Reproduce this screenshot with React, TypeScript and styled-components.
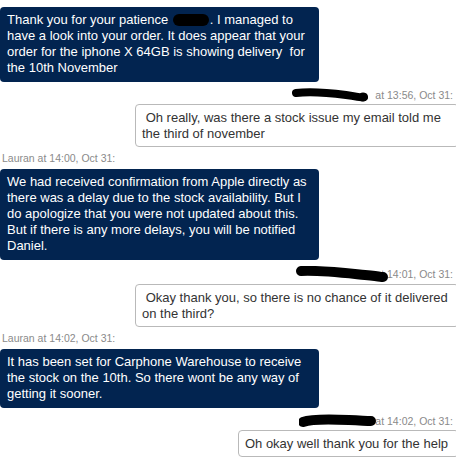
import React from "react";
import styled, { createGlobalStyle } from "styled-components";

type Side = "agent" | "user";

const GlobalStyle = createGlobalStyle`
  html, body {
    margin: 0;
    padding: 0;
    background: #fff;
    overflow: hidden;
  }
  body {
    font-family: "Liberation Sans", Arial, sans-serif;
  }
`;

const Thread = styled.div`
  width: 456px;
  height: 460px;
  box-sizing: border-box;
  padding-top: 7px;
  display: flex;
  flex-direction: column;
  overflow: hidden;
`;

const Row = styled.div<{ $side: Side }>`
  display: flex;
  justify-content: ${(p) => (p.$side === "agent" ? "flex-start" : "flex-end")};
`;

const Bubble = styled.div<{ $side: Side }>`
  box-sizing: border-box;
  font-size: 13px;
  line-height: 16px;
  border-radius: 4px;
  white-space: pre-wrap;
  ${(p) =>
    p.$side === "agent"
      ? `
    width: 319px;
    padding: 5px 7px 6px 7px;
    background: #022450;
    color: #fff;
  `
      : `
    max-width: 324px;
    margin-right: -3px;
    padding: 5px 10px 4px 6px;
    background: #fff;
    color: #333;
    border: 1px solid #b9b9b9;
  `}
`;

const Meta = styled.div<{ $side: Side }>`
  display: flex;
  align-items: center;
  justify-content: ${(p) => (p.$side === "agent" ? "flex-start" : "flex-end")};
  font-size: 10.5px;
  line-height: 13px;
  color: #8a8a8a;
  padding: ${(p) => (p.$side === "agent" ? "5px 0 4px 2px" : "6px 3px 2px 0")};
`;

const Blot = styled.span<{ $w: number }>`
  display: inline-block;
  width: ${(p) => p.$w}px;
  height: 12px;
  background: #000;
  border-radius: 6px;
  vertical-align: -2px;
  margin: 0 1px;
`;

const Scribble = styled.svg<{ $overlap?: number }>`
  position: relative;
  z-index: 1;
  flex: none;
  margin-right: ${(p) => (p.$overlap ? -p.$overlap : 6)}px;
`;

const scribbles = {
  a: (
    <Scribble width="78" height="14" viewBox="0 0 78 14">
      <path d="M5 5 C 20 3, 40 5, 55 7 S 68 10, 73 9" stroke="#000" strokeWidth="8" fill="none" strokeLinecap="round" />
      <circle cx="72" cy="9" r="4.5" fill="#000" />
    </Scribble>
  ),
  b: (
    <Scribble width="94" height="16" viewBox="0 0 94 16" $overlap={14}>
      <path d="M6 5 C 25 4, 50 7, 70 9 S 84 11, 88 11" stroke="#000" strokeWidth="10" fill="none" strokeLinecap="round" />
    </Scribble>
  ),
  c: (
    <Scribble width="78" height="14" viewBox="0 0 78 14" $overlap={2}>
      <path d="M4 8 C 12 5, 30 5, 50 6 S 68 7, 72 7" stroke="#000" strokeWidth="10" fill="none" strokeLinecap="round" />
    </Scribble>
  ),
};

const messages: { side: Side; meta?: React.ReactNode; text: React.ReactNode }[] = [
  {
    side: "agent",
    text: (
      <>
        Thank you for your patience <Blot $w={36} />. I managed to have a look into your order. It does appear that your
        order for the iphone X 64GB is showing delivery  for the 10th November
      </>
    ),
  },
  {
    side: "user",
    meta: (
      <>
        {scribbles.a}at 13:56, Oct 31:
      </>
    ),
    text: " Oh really, was there a stock issue my email told me the third of november",
  },
  {
    side: "agent",
    meta: "Lauran at 14:00, Oct 31:",
    text:
      "We had received confirmation from Apple directly as there was a delay due to the stock availability. But I do apologize that you were not updated about this. But if there is any more delays, you will be notified Daniel.",
  },
  {
    side: "user",
    meta: (
      <>
        {scribbles.b}at 14:01, Oct 31:
      </>
    ),
    text: " Okay thank you, so there is no chance of it delivered on the third?",
  },
  {
    side: "agent",
    meta: "Lauran at 14:02, Oct 31:",
    text:
      "It has been set for Carphone Warehouse to receive the stock on the 10th. So there wont be any way of getting it sooner.",
  },
  {
    side: "user",
    meta: (
      <>
        {scribbles.c}at 14:02, Oct 31:
      </>
    ),
    text: "Oh okay well thank you for the help",
  },
];

export default function App() {
  return (
    <>
      <GlobalStyle />
      <Thread>
        {messages.map((m, i) => (
          <React.Fragment key={i}>
            {m.meta && <Meta $side={m.side}>{m.meta}</Meta>}
            <Row $side={m.side}>
              <Bubble $side={m.side}>{m.text}</Bubble>
            </Row>
          </React.Fragment>
        ))}
      </Thread>
    </>
  );
}
